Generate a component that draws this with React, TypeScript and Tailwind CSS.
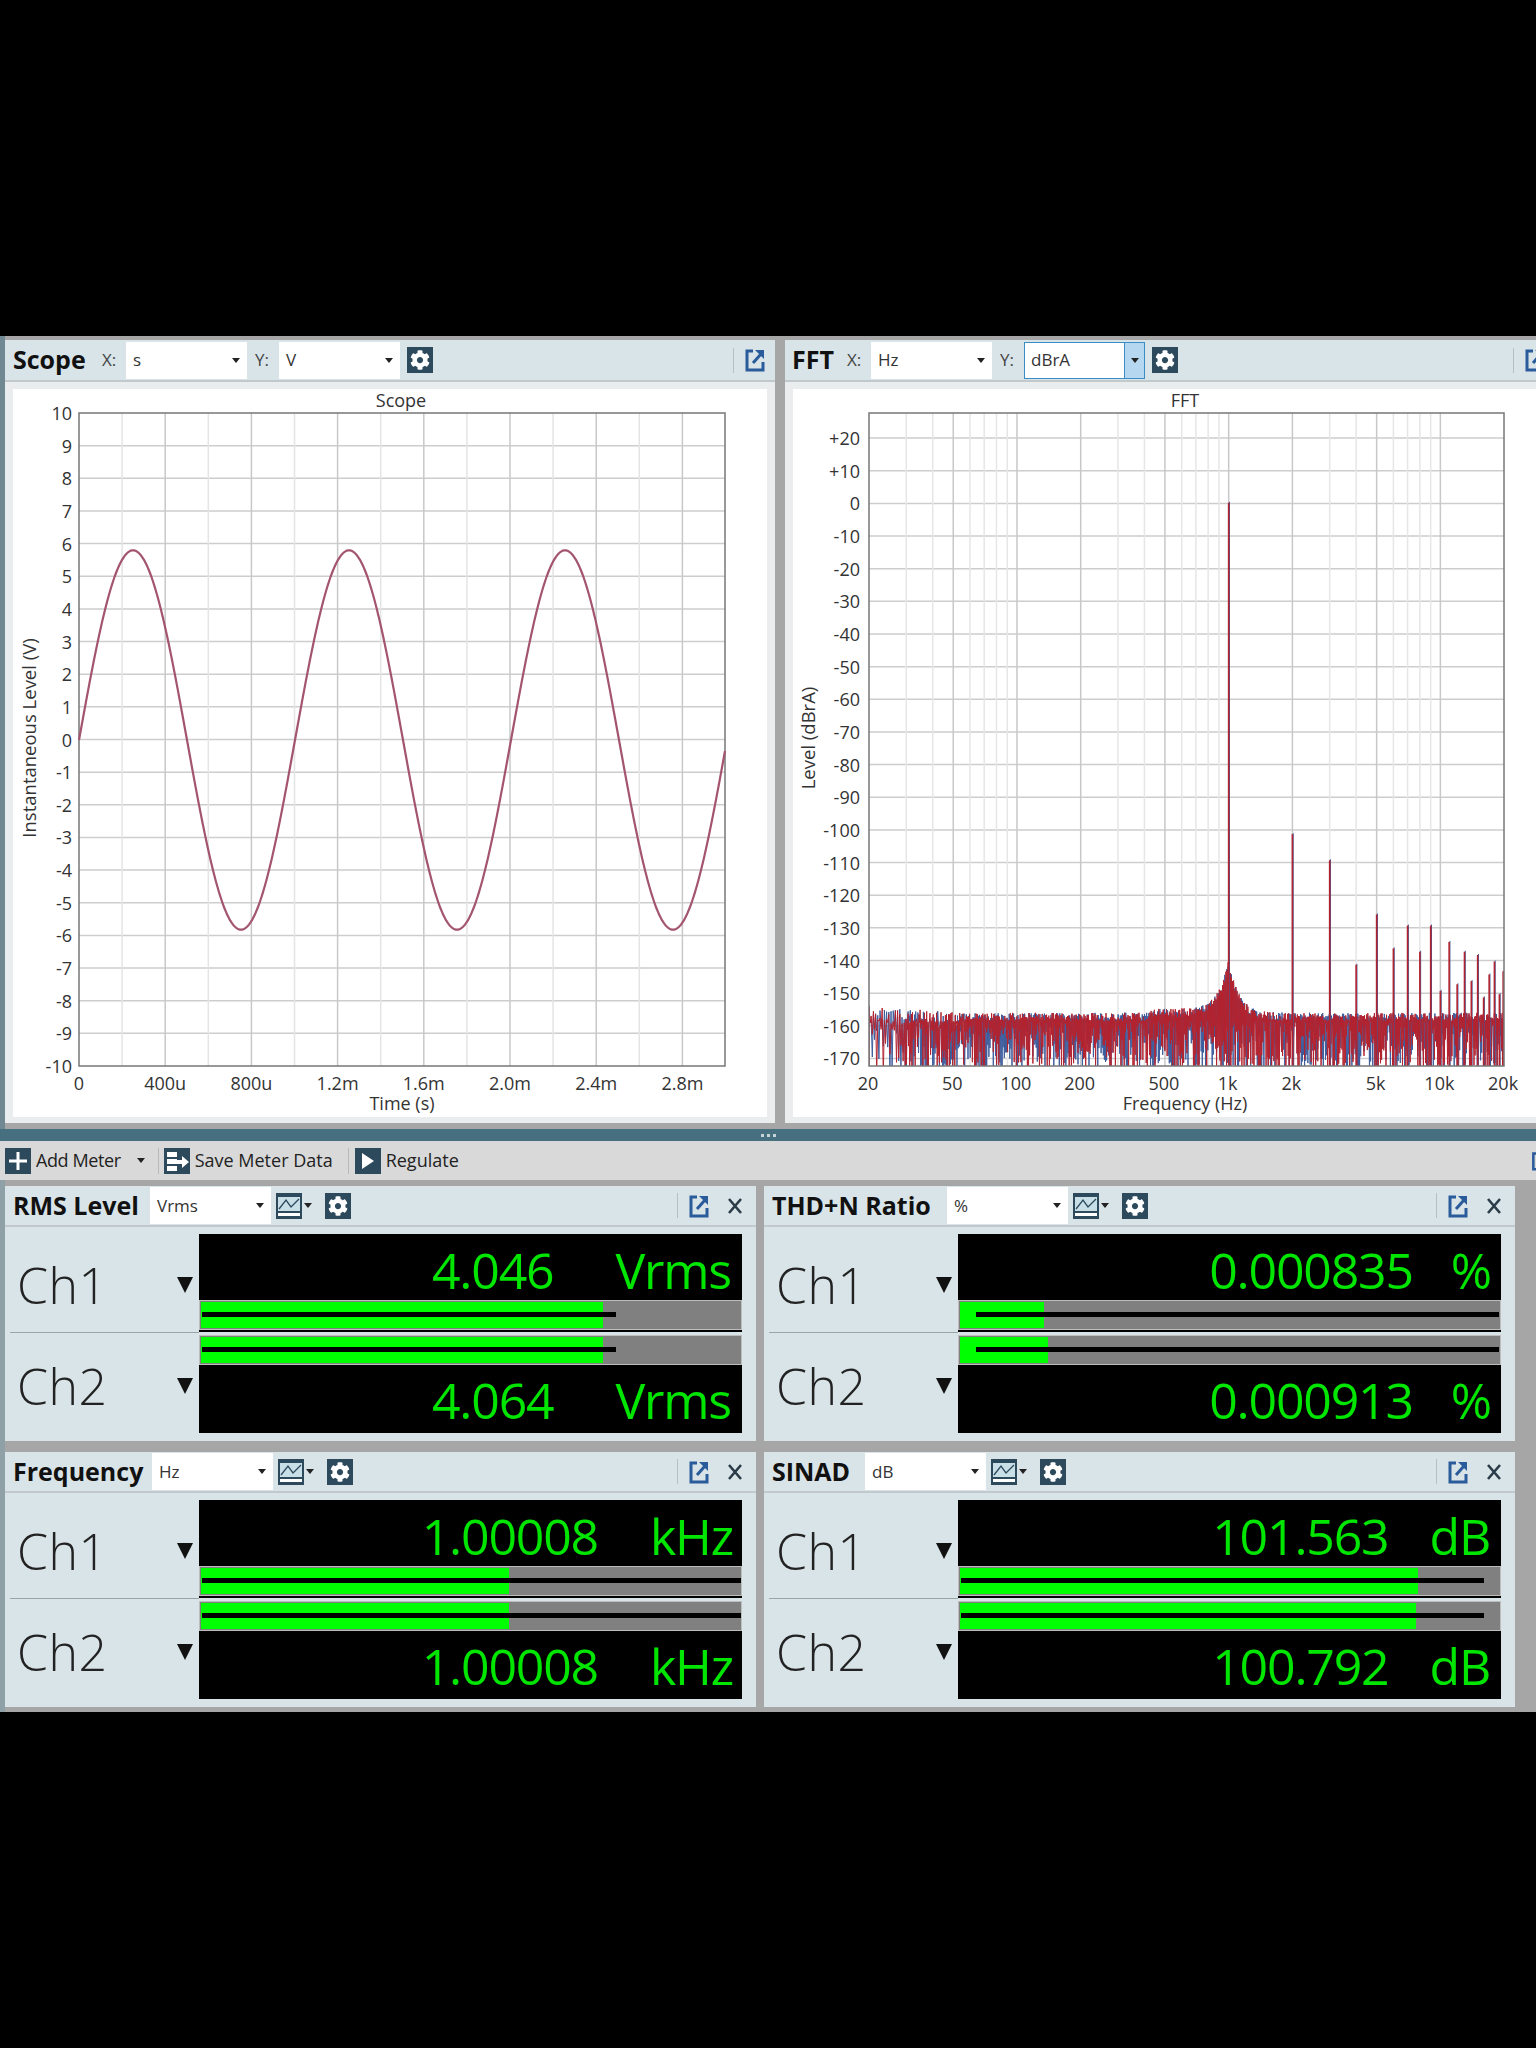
import { FaCog } from "react-icons/fa";

// small seeded random, so the spectrum is the same on every load
function makeRandom(seed: number) {
  let s = seed;
  return () => {
    s = (s + 0x6d2b79f5) | 0;
    let t = Math.imul(s ^ (s >>> 15), 1 | s);
    t = (t + Math.imul(t ^ (t >>> 7), 61 | t)) ^ t;
    return ((t ^ (t >>> 14)) >>> 0) / 4294967296;
  };
}

const PLOT_TOP = 413;
const PLOT_BOTTOM = 1066;

const fftX = (f: number) => 869 + Math.log10(f / 20) * 211.7;
const fftY = (db: number) => 503.4 - (db * 32.65) / 10;

function noisePath(seed: number) {
  const rnd = makeRandom(seed);
  let x = 869;
  let up = true;
  let d = `M${x} ${PLOT_BOTTOM}`;
  while (x < 1504) {
    const dist = Math.abs(x - 1229);
    let top = -157 + 16 * Math.exp(-dist / 10);
    if (x < 960) top += 2.2 * ((960 - x) / 91);
    if (x > 1150 && x < 1229) top += 1.2;
    const spread = x < 960 ? 5 : 2.6;
    const db = up ? top - rnd() * spread + 1 : -158.5 - Math.pow(rnd(), 1.2) * 17;
    d += `L${x.toFixed(1)} ${fftY(db).toFixed(1)}`;
    up = !up;
    x += x < 905 ? 1.1 : 0.55;
  }
  return d;
}

const harmonics: [number, number][] = [
  [1000, 0.5], [2000, -101], [3000, -109], [4000, -141], [5000, -125.6], [6000, -136],
  [7000, -129], [8000, -137], [9000, -129], [10000, -149], [11000, -134], [12000, -147],
  [13000, -137], [14000, -146], [15000, -138], [16000, -151], [17000, -144], [18000, -140],
  [19000, -150], [19800, -143],
];

function sinePath() {
  let d = "";
  for (let x = 79; x <= 725; x += 1) {
    const y = 740 - 189.7 * Math.sin(((x - 79) / 216) * Math.PI * 2);
    d += `${d ? "L" : "M"}${x} ${y.toFixed(1)}`;
  }
  return d;
}

function ScopeChart() {
  const hLines = Array.from({ length: 19 }, (_, i) => PLOT_TOP + (i + 1) * 32.65);
  const vLines = Array.from({ length: 14 }, (_, i) => i + 1);
  const xLabels = ["0", "400u", "800u", "1.2m", "1.6m", "2.0m", "2.4m", "2.8m"];
  return (
    <svg viewBox="13 389 754 728" className="block w-[754px] h-[728px] bg-white">
      <text x="401" y="400" textAnchor="middle" dominantBaseline="central" className="fill-[#333] text-[18px]">Scope</text>
      {hLines.map((y) => (
        <line key={y} x1="79" x2="725" y1={y} y2={y} stroke="#cdcdcd" strokeWidth="1.5" />
      ))}
      {vLines.map((i) => (
        <line key={i} x1={79 + i * 43.1} x2={79 + i * 43.1} y1={PLOT_TOP} y2={PLOT_BOTTOM}
          stroke={i % 2 === 0 ? "#c8c8c8" : "#e4e4e4"} strokeWidth="1.5" />
      ))}
      <rect x="79" y={PLOT_TOP} width="646" height={PLOT_BOTTOM - PLOT_TOP} fill="none" stroke="#777" strokeWidth="1.5" />
      {Array.from({ length: 21 }, (_, i) => 10 - i).map((v, i) => (
        <text key={v} x="72" y={PLOT_TOP + i * 32.65} textAnchor="end" dominantBaseline="central" className="fill-[#333] text-[18px]">{v}</text>
      ))}
      {xLabels.map((t, i) => (
        <text key={t} x={79 + i * 86.2} y="1083" textAnchor="middle" dominantBaseline="central" className="fill-[#333] text-[18px]">{t}</text>
      ))}
      <text x="402" y="1103" textAnchor="middle" dominantBaseline="central" className="fill-[#333] text-[18px]">Time (s)</text>
      <text transform="translate(28 738) rotate(-90)" textAnchor="middle" dominantBaseline="central" className="fill-[#333] text-[18.5px]">Instantaneous Level (V)</text>
      <path d={sinePath()} fill="none" stroke="#a3546f" strokeWidth="2.2" />
    </svg>
  );
}

function FftChart() {
  const minor: number[] = [];
  [10, 100, 1000, 10000].forEach((dec) => {
    for (let k = 1; k <= 9; k++) {
      const f = dec * k;
      if (f > 20 && f < 20000) minor.push(f);
    }
  });
  const labelled = [50, 100, 200, 500, 1000, 2000, 5000, 10000];
  const xLabels: [string, number][] = [
    ["20", 20], ["50", 50], ["100", 100], ["200", 200], ["500", 500], ["1k", 1000],
    ["2k", 2000], ["5k", 5000], ["10k", 10000], ["20k", 20000],
  ];
  const levels = Array.from({ length: 20 }, (_, i) => 20 - i * 10);
  return (
    <svg viewBox="793 389 744 728" className="block w-[744px] h-[728px] bg-white">
      <defs>
        <clipPath id="fftClip">
          <rect x="869" y={PLOT_TOP} width="635" height={PLOT_BOTTOM - PLOT_TOP} />
        </clipPath>
      </defs>
      <text x="1185" y="400" textAnchor="middle" dominantBaseline="central" className="fill-[#333] text-[18px]">FFT</text>
      {levels.map((db) => (
        <line key={db} x1="869" x2="1504" y1={fftY(db)} y2={fftY(db)} stroke="#cdcdcd" strokeWidth="1.5" />
      ))}
      {minor.map((f) => (
        <line key={f} x1={fftX(f)} x2={fftX(f)} y1={PLOT_TOP} y2={PLOT_BOTTOM}
          stroke={labelled.includes(f) ? "#c8c8c8" : "#e6e6e6"} strokeWidth="1.5" />
      ))}
      <g clipPath="url(#fftClip)">
        <path d={noisePath(7)} fill="none" stroke="#3d5c9c" strokeWidth="1" />
        <path d={noisePath(23)} fill="none" stroke="#b3232f" strokeWidth="1" />
        {harmonics.map(([f, db]) => (
          <g key={f}>
            <line x1={fftX(f) + 0.8} x2={fftX(f) + 0.8} y1={fftY(db)} y2={PLOT_BOTTOM} stroke="#3d5c9c" strokeWidth="1" />
            <line x1={fftX(f)} x2={fftX(f)} y1={fftY(db) + 1} y2={PLOT_BOTTOM} stroke="#b3232f" strokeWidth="1.6" />
          </g>
        ))}
      </g>
      <rect x="869" y={PLOT_TOP} width="635" height={PLOT_BOTTOM - PLOT_TOP} fill="none" stroke="#777" strokeWidth="1.5" />
      {levels.map((db) => (
        <text key={db} x="860" y={fftY(db)} textAnchor="end" dominantBaseline="central" className="fill-[#333] text-[18px]">
          {db > 0 ? `+${db}` : db}
        </text>
      ))}
      {xLabels.map(([t, f]) => (
        <text key={t} x={fftX(f) - 1} y="1083" textAnchor="middle" dominantBaseline="central" className="fill-[#333] text-[18px]">{t}</text>
      ))}
      <text x="1185" y="1103" textAnchor="middle" dominantBaseline="central" className="fill-[#333] text-[18px]">Frequency (Hz)</text>
      <text transform="translate(807 738) rotate(-90)" textAnchor="middle" dominantBaseline="central" className="fill-[#333] text-[18.5px]">Level (dBrA)</text>
    </svg>
  );
}

function GearButton() {
  return (
    <div className="flex w-[26px] h-[26px] shrink-0 items-center justify-center bg-[#2c4a5c]">
      <FaCog className="w-[20px] h-[20px] text-white" />
    </div>
  );
}

function ChartButton() {
  return (
    <div className="flex items-center gap-[2px] shrink-0">
      <svg viewBox="0 0 26 26" className="w-[26px] h-[26px]">
        <rect width="26" height="26" fill="#2c4a5c" />
        <rect x="2" y="4" width="22" height="14" fill="#c9dfe8" />
        <path d="M3 16 L10 7 L15 14 L23 6" fill="none" stroke="#2c4a5c" strokeWidth="1.3" />
        <rect x="2" y="20" width="22" height="3" fill="#fff" />
      </svg>
      <Arrow />
    </div>
  );
}

function Arrow() {
  return (
    <svg viewBox="0 0 8 5" className="w-[8px] h-[5px] shrink-0">
      <path d="M0 0H8L4 5Z" fill="#222" />
    </svg>
  );
}

function ExpandIcon({ className }: { className: string }) {
  return (
    <svg viewBox="0 0 20 24" className={className}>
      <path d="M8 3H2V22H18V14" fill="none" stroke="#2a5b9a" strokeWidth="3" />
      <path d="M8 15L16 6" fill="none" stroke="#2a5b9a" strokeWidth="3" />
      <path d="M10 2H19V11Z" fill="#2a5b9a" />
    </svg>
  );
}

function Select({ text, widthClass = "w-[121px]", focused = false }: { text: string; widthClass?: string; focused?: boolean }) {
  if (focused) {
    return (
      <div className={`flex h-[37px] shrink-0 items-center border border-[#3a8cc6] bg-white ${widthClass}`}>
        <span className="flex-1 pl-[6px] text-[17px] text-[#333]">{text}</span>
        <span className="flex h-full w-[20px] items-center justify-center border-l border-[#3a8cc6] bg-[#b6d7f0]">
          <Arrow />
        </span>
      </div>
    );
  }
  return (
    <div className={`flex h-[37px] shrink-0 items-center justify-between bg-white pl-[7px] pr-[7px] ${widthClass}`}>
      <span className="text-[17px] text-[#333]">{text}</span>
      <Arrow />
    </div>
  );
}

function GraphPanel({ title, titleClass, axisGapClass, x, y, focused, chart }: {
  title: string;
  titleClass: string;
  axisGapClass: string;
  x: string;
  y: string;
  focused?: boolean;
  chart: React.ReactNode;
}) {
  return (
    <div className="flex w-[770px] flex-col bg-[#e9eded]">
      <div className="flex h-[42px] items-center bg-[#d9e4e8] border-b-2 border-[#c2c9cc]">
        <span className={`text-[25px] font-bold text-[#111] ${titleClass}`}>{title}</span>
        <span className={`text-[17px] text-[#444] ${axisGapClass}`}>X:</span>
        <div className="ml-[9px]"><Select text={x} /></div>
        <span className="ml-[8px] w-[24px] text-[17px] text-[#444]">Y:</span>
        <Select text={y} focused={focused} />
        <div className="ml-[7px]"><GearButton /></div>
        <div className="ml-auto flex items-center">
          <div className="h-[25px] w-[1px] bg-[#b5c0c4]" />
          <ExpandIcon className="ml-[11px] mr-[10px] w-[20px] h-[24px] shrink-0" />
        </div>
      </div>
      <div className="pt-[7px] pl-[8px] pb-[6px]">{chart}</div>
    </div>
  );
}

type MeterData = {
  title: string;
  titleWidth: string;
  unit: string;
  unitText: string;
  values: [string, string];
  valueGap: string;
  rightPad: string;
  green: [number, number];
  peak: [number, number];
};

function Bar({ green, peakFrom, peakTo }: { green: number; peakFrom: number; peakTo: number }) {
  return (
    <div className="relative h-[30px] border border-[#bdbdbd] bg-[#808080]">
      <div className="absolute left-[1px] top-[1px] bottom-[1px] bg-[#00ff00]" style={{ width: green }} />
      <div className="absolute top-[11px] h-[5px] bg-black" style={{ left: peakFrom, width: peakTo - peakFrom }} />
    </div>
  );
}

function ChannelLabel({ name, extraClass }: { name: string; extraClass: string }) {
  return (
    <div className={`flex flex-1 items-center justify-between pl-[7px] pr-[6px] ${extraClass}`}>
      <span className="text-[50px] leading-none font-light tracking-[0.5px] text-[#222]">{name}</span>
      <svg viewBox="0 0 16 16" className="w-[16px] h-[16px]">
        <path d="M0 0H16L8 16Z" fill="#111" />
      </svg>
    </div>
  );
}

function Reading({ m, value, extraClass }: { m: MeterData; value: string; extraClass: string }) {
  return (
    <div className={`flex items-center justify-end bg-black text-[50px] leading-none font-normal tracking-[-1.2px] text-[#00e600] ${m.rightPad} ${extraClass}`}>
      <span className={m.valueGap}>{value}</span>
      <span>{m.unitText}</span>
    </div>
  );
}

function MeterPanel({ m }: { m: MeterData }) {
  return (
    <div className="flex w-[751px] flex-col bg-[#d9e4e8]">
      <div className="flex h-[41px] items-center border-b-2 border-[#c2c9cc] pl-[8px]">
        <span className={`shrink-0 whitespace-nowrap text-[25px] font-bold text-[#111] ${m.titleWidth}`}>{m.title}</span>
        <div className="ml-[11px]"><Select text={m.unit} /></div>
        <div className="ml-[5px]"><ChartButton /></div>
        <div className="ml-[13px]"><GearButton /></div>
        <div className="ml-auto flex items-center">
          <div className="h-[25px] w-[1px] bg-[#b5c0c4]" />
          <ExpandIcon className="ml-[11px] w-[20px] h-[24px] shrink-0" />
          <svg viewBox="0 0 16 16" className="ml-[18px] mr-[13px] w-[16px] h-[16px]">
            <path d="M2 1L14 15M14 1L2 15" stroke="#2a3c48" strokeWidth="2.6" fill="none" />
          </svg>
        </div>
      </div>
      <div className="flex pt-[7px] pb-[8px]">
        <div className="flex w-[194px] shrink-0 flex-col">
          <ChannelLabel name="Ch1" extraClass="border-b border-[#9aa5a8] ml-[5px] pt-[4px]" />
          <ChannelLabel name="Ch2" extraClass="ml-[5px] pt-[6px]" />
        </div>
        <div className="flex w-[543px] shrink-0 flex-col">
          <Reading m={m} value={m.values[0]} extraClass="h-[66px] pt-[6px]" />
          <Bar green={m.green[0]} peakFrom={m.peak[0]} peakTo={m.peak[1]} />
          <div className="h-[2px] bg-black mb-[3px]" />
          <Bar green={m.green[1]} peakFrom={m.peak[0]} peakTo={m.peak[1]} />
          <Reading m={m} value={m.values[1]} extraClass="h-[68px] pt-[2px]" />
        </div>
      </div>
    </div>
  );
}

const rms: MeterData = { title: "RMS Level", titleWidth: "w-[126px]", unit: "Vrms", unitText: "Vrms", values: ["4.046", "4.064"], valueGap: "mr-[62px]", rightPad: "pr-[11px]", green: [402, 402], peak: [2, 416] };
const thd: MeterData = { title: "THD+N Ratio", titleWidth: "w-[164px]", unit: "%", unitText: "%", values: ["0.000835", "0.000913"], valueGap: "mr-[38px]", rightPad: "pr-[10px]", green: [84, 88], peak: [17, 540] };
const freq: MeterData = { title: "Frequency", titleWidth: "w-[128px]", unit: "Hz", unitText: "kHz", values: ["1.00008", "1.00008"], valueGap: "mr-[52px]", rightPad: "pr-[9px]", green: [308, 308], peak: [2, 541] };
const sinad: MeterData = { title: "SINAD", titleWidth: "w-[82px]", unit: "dB", unitText: "dB", values: ["101.563", "100.792"], valueGap: "mr-[41px]", rightPad: "pr-[11px]", green: [458, 456], peak: [2, 525] };

function App() {
  return (
    <div className="flex h-[2048px] w-[1536px] flex-col overflow-hidden bg-black font-['Open_Sans','Noto_Sans',sans-serif]">
      <div className="h-[336px] shrink-0" />

      <div className="flex h-[793px] shrink-0 gap-[10px] border-l-[5px] border-[#6f8892] bg-[#a6a6a6] pt-[4px]">
        <div className="w-[770px] shrink-0">
          <GraphPanel title="Scope" titleClass="ml-[8px] w-[85px]" axisGapClass="ml-[4px] w-[15px]" x="s" y="V" chart={<ScopeChart />} />
        </div>
        <div className="flex-1 overflow-hidden">
          <GraphPanel title="FFT" titleClass="ml-[7px] w-[48px]" axisGapClass="ml-[7px] w-[15px]" x="Hz" y="dBrA" focused chart={<FftChart />} />
        </div>
      </div>

      <div className="flex h-[12px] shrink-0 items-center justify-center gap-[3px] bg-[#46707f]">
        <span className="h-[3px] w-[3px] bg-[#c5d3d8]" />
        <span className="h-[3px] w-[3px] bg-[#c5d3d8]" />
        <span className="h-[3px] w-[3px] bg-[#c5d3d8]" />
      </div>

      <div className="flex h-[39px] shrink-0 items-center bg-[#d9d9d9] pl-[5px] text-[18px] text-[#222]">
        <div className="flex h-[26px] w-[26px] items-center justify-center bg-[#2c4a5c]">
          <svg viewBox="0 0 20 20" className="h-[20px] w-[20px]">
            <path d="M10 1V19M1 10H19" stroke="#fff" strokeWidth="3" />
          </svg>
        </div>
        <span className="ml-[5px] tracking-[-0.4px]">Add Meter</span>
        <div className="ml-[16px]"><Arrow /></div>
        <div className="ml-[13px] h-[26px] w-[1px] bg-[#b9b9b9]" />
        <div className="ml-[5px] h-[26px] w-[26px] bg-[#2c4a5c]">
          <svg viewBox="0 0 26 26" className="h-[26px] w-[26px]">
            <path d="M3 4H13V9H3ZM3 11H13V16H3ZM3 18H13V23H3Z" fill="#fff" />
            <path d="M13 12H18V8L25 14L18 20V16H13Z" fill="#fff" />
          </svg>
        </div>
        <span className="ml-[5px]">Save Meter Data</span>
        <div className="ml-[15px] h-[26px] w-[1px] bg-[#b9b9b9]" />
        <div className="ml-[6px] flex h-[26px] w-[26px] items-center justify-center bg-[#2c4a5c]">
          <svg viewBox="0 0 12 16" className="h-[16px] w-[12px]">
            <path d="M0 0L12 8L0 16Z" fill="#fff" />
          </svg>
        </div>
        <span className="ml-[5px]">Regulate</span>
        <div className="ml-auto w-[6px] overflow-hidden">
          <ExpandIcon className="w-[20px] h-[20px] max-w-none" />
        </div>
      </div>

      <div className="flex h-[532px] shrink-0 gap-[8px] border-l-[5px] border-[#8fa0a6] bg-[#a6a6a6] pt-[6px]">
        <div className="flex flex-col gap-[11px]">
          <MeterPanel m={rms} />
          <MeterPanel m={freq} />
        </div>
        <div className="flex flex-col gap-[11px]">
          <MeterPanel m={thd} />
          <MeterPanel m={sinad} />
        </div>
      </div>

      <div className="flex-1 bg-black" />
    </div>
  );
}

export default App;
